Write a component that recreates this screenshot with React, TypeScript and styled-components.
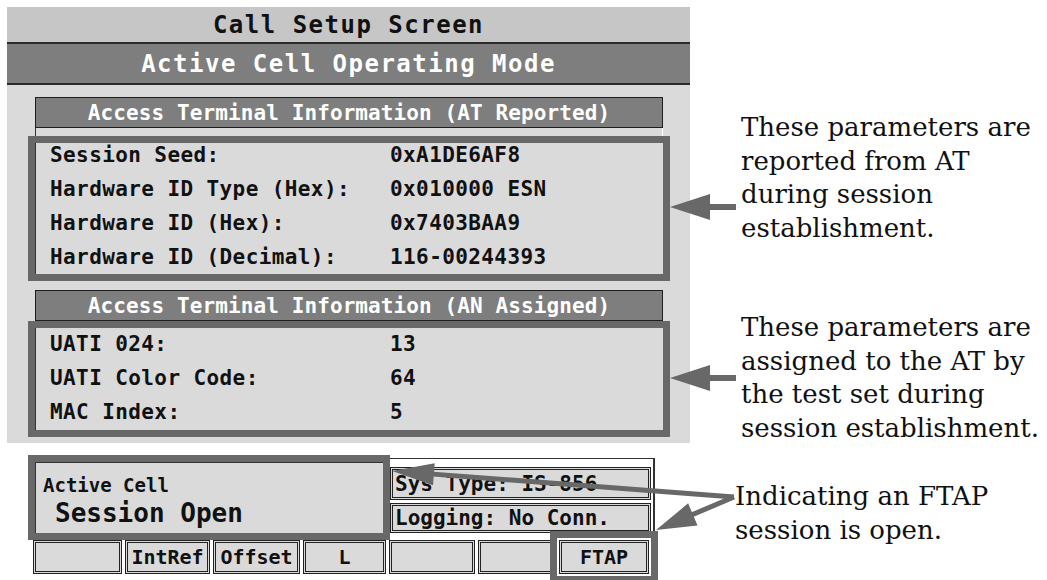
import React from 'react'
import styled, { createGlobalStyle } from 'styled-components'

const SCREEN_FONT = `"DejaVu Sans Mono", "Liberation Mono", monospace`
const NOTE_FONT = `"DejaVu Serif", "Liberation Serif", serif`
const MARK = '#686868'

const GlobalStyle = createGlobalStyle`
	html, body {
		margin: 0;
		padding: 0;
		background: #fff;
	}
	body {
		width: 1047px;
		height: 580px;
		overflow: hidden;
	}
`

type Pt = [number, number]

function Arrow({ from, to, head = 40, half = 13, width = 6 }: { from: Pt; to: Pt; head?: number; half?: number; width?: number }) {
	const dx = to[0] - from[0]
	const dy = to[1] - from[1]
	const len = Math.hypot(dx, dy)
	const ux = dx / len
	const uy = dy / len
	const bx = to[0] - ux * head
	const by = to[1] - uy * head
	const nx = -uy
	const ny = ux
	const pts = [to, [bx + nx * half, by + ny * half], [bx - nx * half, by - ny * half]]
		.map((p) => p.join(','))
		.join(' ')
	return (
		<g>
			<line x1={from[0]} y1={from[1]} x2={bx + ux * 4} y2={by + uy * 4} stroke={MARK} strokeWidth={width} />
			<polygon points={pts} fill={MARK} />
		</g>
	)
}

export default function App() {
	return (
		<>
			<GlobalStyle />
			<Page>
				<LeftColumn>
					<Screen>
						<TitleRow>Call Setup Screen</TitleRow>
						<ModeBar>Active Cell Operating Mode</ModeBar>
						<Section $top={12}>
							<SectionHeader>Access Terminal Information (AT Reported)</SectionHeader>
							<FrameGap />
							<InfoBody $height={145} $padTop={0}>
								<Row>
									<span>Session Seed:</span>
									<span>0xA1DE6AF8</span>
								</Row>
								<Row>
									<span>Hardware ID Type (Hex):</span>
									<span>0x010000 ESN</span>
								</Row>
								<Row>
									<span>Hardware ID (Hex):</span>
									<span>0x7403BAA9</span>
								</Row>
								<Row>
									<span>Hardware ID (Decimal):</span>
									<span>116-00244393</span>
								</Row>
							</InfoBody>
						</Section>
						<Section $top={9}>
							<SectionHeader>Access Terminal Information (AN Assigned)</SectionHeader>
							<InfoBody $height={116} $padTop={4}>
								<Row>
									<span>UATI 024:</span>
									<span>13</span>
								</Row>
								<Row>
									<span>UATI Color Code:</span>
									<span>64</span>
								</Row>
								<Row>
									<span>MAC Index:</span>
									<span>5</span>
								</Row>
							</InfoBody>
						</Section>
					</Screen>
					<Status>
						<StatusTop>
							<ActiveCell>
								<CellLabel>Active Cell</CellLabel>
								<CellState>Session Open</CellState>
							</ActiveCell>
							<StatusSide>
								<StatusField $height={33}>Sys Type: IS-856</StatusField>
								<StatusField $height={30}>Logging: No Conn.</StatusField>
							</StatusSide>
						</StatusTop>
						<KeyRow>
							<Key $width={89} />
							<Key $width={85}>IntRef</Key>
							<Key $width={87}>Offset</Key>
							<Key $width={83}>L</Key>
							<Key $width={86} />
							<Key $width={78} />
							<Key $width={90} $marked>
								FTAP
							</Key>
						</KeyRow>
					</Status>
				</LeftColumn>
				<Notes>
					<Note>
						These parameters are
						<br />
						reported from AT
						<br />
						during session
						<br />
						establishment.
					</Note>
					<Note $top={66}>
						These parameters are
						<br />
						assigned to the AT by
						<br />
						the test set during
						<br />
						session establishment.
					</Note>
					<Note $top={35} $shift={-6}>
						Indicating an FTAP
						<br />
						session is open.
					</Note>
				</Notes>
				<Callouts viewBox="0 0 1047 580" width={1047} height={580}>
					<Arrow from={[736, 207]} to={[670, 207]} />
					<Arrow from={[736, 378]} to={[670, 378]} />
					<Arrow from={[734, 497]} to={[392, 471]} head={42} half={11} width={5} />
					<Arrow from={[734, 497]} to={[656, 530]} head={40} half={12} width={5} />
				</Callouts>
			</Page>
		</>
	)
}

const Page = styled.div`
	position: relative;
	display: flex;
	width: 1047px;
	height: 580px;
	overflow: hidden;
`

const LeftColumn = styled.div`
	width: 690px;
	flex-shrink: 0;
	display: flex;
	flex-direction: column;
`

const Screen = styled.div`
	margin: 7px 0 0 7px;
	width: 683px;
	height: 436px;
	background: #dadada;
	display: flex;
	flex-direction: column;
	font-family: ${SCREEN_FONT};
	font-weight: bold;
	color: #111;
`

const TitleRow = styled.div`
	height: 35px;
	background: #c6c6c6;
	border-bottom: 2px solid #2a2a2a;
	display: flex;
	align-items: center;
	justify-content: center;
	font-size: 24px;
	letter-spacing: 1.5px;
`

const ModeBar = styled.div`
	height: 39px;
	background: #7e7e7e;
	border-bottom: 2px solid #2a2a2a;
	display: flex;
	align-items: center;
	justify-content: center;
	font-size: 24px;
	letter-spacing: 1.5px;
	color: #fff;
`

const Section = styled.div<{ $top: number }>`
	margin-top: ${(p) => p.$top}px;
	padding: 0 20px 0 21px;
	display: flex;
	flex-direction: column;
`

const SectionHeader = styled.div`
	box-sizing: border-box;
	height: 31px;
	margin: 0 7px;
	background: #7e7e7e;
	border: 1px solid #1e1e1e;
	display: flex;
	align-items: center;
	justify-content: center;
	font-size: 21px;
	letter-spacing: 0.1px;
	color: #fff;
`

const FrameGap = styled.div`
	height: 8px;
	margin: 0 7px;
	border-left: 1px solid #333;
	border-right: 1px solid #fff;
`

const InfoBody = styled.div<{ $height: number; $padTop: number }>`
	box-sizing: border-box;
	height: ${(p) => p.$height}px;
	border: 7px solid ${MARK};
	padding: ${(p) => p.$padTop}px 0 0 15px;
	box-shadow: inset 1px 0 0 #333;
	display: flex;
	flex-direction: column;
	gap: 10px;
`

const Row = styled.div`
	display: grid;
	grid-template-columns: 340px 1fr;
	font-size: 21px;
	line-height: 24px;
	letter-spacing: 0.4px;
	white-space: nowrap;
`

const Status = styled.div`
	margin: 12px 0 0 28px;
	width: 629px;
	display: flex;
	flex-direction: column;
	font-family: ${SCREEN_FONT};
	color: #111;
`

const StatusTop = styled.div`
	display: flex;
	height: 85px;
`

const ActiveCell = styled.div`
	box-sizing: border-box;
	width: 362px;
	border: 7px solid ${MARK};
	background: #dadada;
	padding: 12px 0 0 8px;
	box-shadow: inset 1px 1px 0 #333;
`

const CellLabel = styled.div`
	font-size: 19px;
	line-height: 22px;
	font-weight: bold;
`

const CellState = styled.div`
	margin: 2px 0 0 12px;
	font-size: 26px;
	line-height: 30px;
	font-weight: 600;
`

const StatusSide = styled.div`
	box-sizing: border-box;
	width: 265px;
	margin-top: 3px;
	padding: 8px 2px 0 0;
	border-top: 1px solid #333;
	border-right: 2px solid #333;
	display: flex;
	flex-direction: column;
	gap: 3px;
`

const StatusField = styled.div<{ $height: number }>`
	box-sizing: border-box;
	height: ${(p) => p.$height}px;
	border: 3px double #222;
	background: #dadada;
	padding-left: 2px;
	display: flex;
	align-items: center;
	font-size: 21px;
	font-weight: bold;
	white-space: nowrap;
`

const KeyRow = styled.div`
	display: flex;
	gap: 3px;
	padding-left: 5px;
	height: 36px;
`

const Key = styled.div<{ $width: number; $marked?: boolean }>`
	box-sizing: border-box;
	width: ${(p) => p.$width}px;
	height: 34px;
	border: 3px double #222;
	background: #dadada;
	display: flex;
	align-items: center;
	justify-content: center;
	font-size: 20px;
	font-weight: bold;
	outline: ${(p) => (p.$marked ? `7px solid ${MARK}` : 'none')};
	outline-offset: 2px;
`

const Notes = styled.div`
	flex: 1;
	padding: 111px 0 0 51px;
	display: flex;
	flex-direction: column;
	font-family: ${NOTE_FONT};
	font-size: 26px;
	line-height: 33.5px;
	color: #111;
`

const Note = styled.div<{ $top?: number; $shift?: number }>`
	margin-top: ${(p) => p.$top ?? 0}px;
	margin-left: ${(p) => p.$shift ?? 0}px;
	white-space: nowrap;
`

const Callouts = styled.svg`
	position: absolute;
	left: 0;
	top: 0;
	pointer-events: none;
`
